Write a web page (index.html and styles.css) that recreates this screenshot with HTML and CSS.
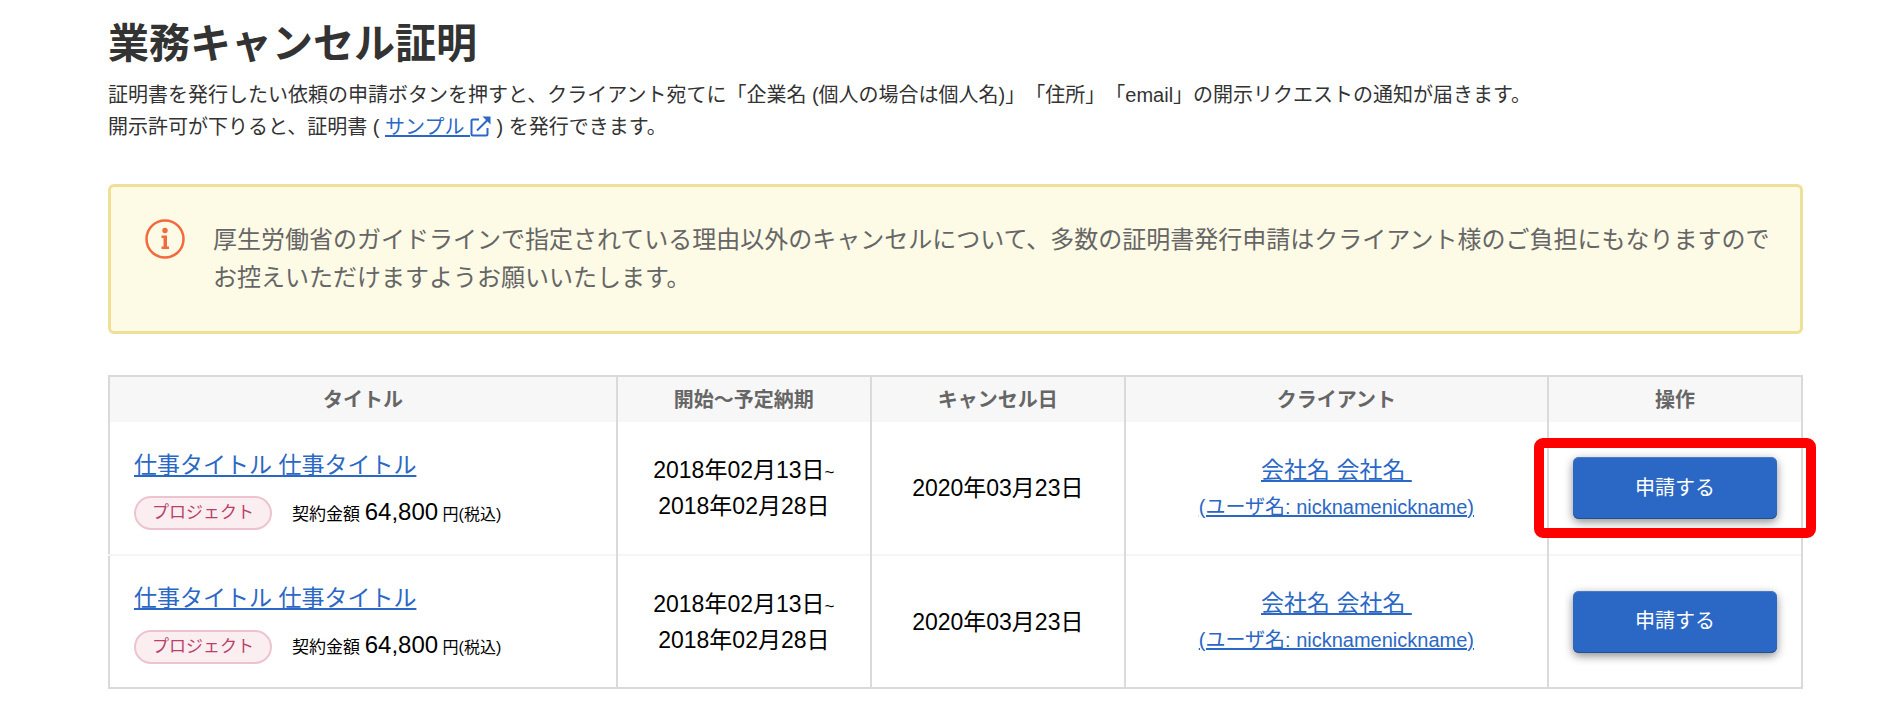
FILE: index.html
```html
<!DOCTYPE html>
<html lang="ja">
<head>
    <meta charset="UTF-8">
    <meta name="viewport" content="width=device-width, initial-scale=1.0">
    <title>業務キャンセル証明</title>
    <link rel="stylesheet" href="styles.css">
</head>
<body>
    <main class="container">
        <h1>業務キャンセル証明</h1>
        <p class="lead">
            証明書を発行したい依頼の申請ボタンを押すと、クライアント宛てに「企業名 (個人の場合は個人名)」「住所」「email」の開示リクエストの通知が届きます。<br>
            開示許可が下りると、証明書 ( <a href="#">サンプル <svg class="external-icon" viewBox="0 0 21 21" aria-hidden="true"><path d="M9 3.500H3Q1.500 3.500 1.500 5V18Q1.500 19.500 3 19.500H16Q17.500 19.500 17.500 18V12M7 14.500L17.500 4"/><path class="arrow" d="M12.500 0.500H20.500V8.500Z"/></svg></a> ) を発行できます。
        </p>

        <!-- Notice -->
        <div class="notice">
            <svg class="notice-icon" viewBox="0 0 40 40" aria-hidden="true">
                <circle class="ring" cx="20" cy="20" r="18.500"/>
                <circle cx="20" cy="11.500" r="2.700"/>
                <path d="M16.500 16.500H22V27.500H24V30H16.500V27.500H18.500V19H16.500Z"/>
            </svg>
            <p>厚生労働省のガイドラインで指定されている理由以外のキャンセルについて、多数の証明書発行申請はクライアント様のご負担にもなりますのでお控えいただけますようお願いいたします。</p>
        </div>

        <!-- Job list -->
        <table class="job-table">
            <thead>
                <tr>
                    <th class="col-title">タイトル</th>
                    <th class="col-date">開始〜予定納期</th>
                    <th class="col-date">キャンセル日</th>
                    <th class="col-client">クライアント</th>
                    <th class="col-action">操作</th>
                </tr>
            </thead>
            <tbody>
                <tr>
                    <td class="job">
                        <a href="#" class="job-title">仕事タイトル 仕事タイトル</a>
                        <div class="job-info">
                            <span class="badge">プロジェクト</span>
                            <span class="price">契約金額 <span class="amount">64,800</span><span class="unit"> 円(税込)</span></span>
                        </div>
                    </td>
                    <td>2018年02月13日<span class="tilde">~</span><br>2018年02月28日</td>
                    <td>2020年03月23日</td>
                    <td>
                        <a href="#">会社名 会社名&nbsp;</a><br>
                        <a href="#" class="nickname">(ユーザ名: nicknamenickname)</a>
                    </td>
                    <td>
                        <div class="action highlight">
                            <button type="button">申請する</button>
                        </div>
                    </td>
                </tr>
                <tr>
                    <td class="job">
                        <a href="#" class="job-title">仕事タイトル 仕事タイトル</a>
                        <div class="job-info">
                            <span class="badge">プロジェクト</span>
                            <span class="price">契約金額 <span class="amount">64,800</span><span class="unit"> 円(税込)</span></span>
                        </div>
                    </td>
                    <td>2018年02月13日<span class="tilde">~</span><br>2018年02月28日</td>
                    <td>2020年03月23日</td>
                    <td>
                        <a href="#">会社名 会社名&nbsp;</a><br>
                        <a href="#" class="nickname">(ユーザ名: nicknamenickname)</a>
                    </td>
                    <td>
                        <div class="action">
                            <button type="button">申請する</button>
                        </div>
                    </td>
                </tr>
            </tbody>
        </table>
    </main>
</body>
</html>
```
FILE: styles.css
```css
* {
    box-sizing: border-box;
}
body {
    margin: 0;
    background-color: #fff;
    color: #000;
    font-family: "Liberation Sans", "Noto Sans CJK JP", sans-serif;
    text-spacing-trim: space-all;
}
a {
    color: #2b68c5;
    text-decoration: underline;
}
.container {
    padding: 18px 97px 36px 108px;
}
h1 {
    margin: 0;
    color: #333;
    font-size: 41px;
    line-height: 52px;
}
.lead {
    margin: 9px 0 41px;
    color: #333;
    font-size: 20px;
    line-height: 32px;
}
.external-icon {
    width: 21px;
    height: 21px;
    vertical-align: -3px;
    fill: none;
    stroke: #2b68c5;
    stroke-width: 2;
}
.external-icon .arrow {
    fill: #2b68c5;
    stroke: none;
}

/* Notice */
.notice {
    display: flex;
    align-items: flex-start;
    gap: 28px;
    margin-bottom: 41px;
    padding: 32px 20px 34px 34px;
    border: 3px solid #eedf99;
    border-radius: 6px;
    background-color: #fdfae6;
    color: #666;
    font-size: 24px;
    line-height: 38px;
}
.notice p {
    margin: 0;
    padding-top: 2px;
}
.notice-icon {
    flex: none;
    width: 40px;
    height: 40px;
    fill: #f26a3d;
}
.notice-icon .ring {
    fill: none;
    stroke: #f26a3d;
    stroke-width: 2.5;
}

/* Job list */
.job-table {
    width: 100%;
    table-layout: fixed;
    border-collapse: collapse;
    border: 2px solid #dadada;
}
.job-table th {
    height: 46px;
    padding: 0;
    border-right: 2px solid #dadada;
    background-color: #f7f7f7;
    color: #666;
    font-size: 20px;
    line-height: 28px;
}
.job-table td {
    height: 133px;
    padding: 0 24px;
    border-right: 2px solid #dadada;
    font-size: 23px;
    line-height: 36px;
    text-align: center;
    vertical-align: middle;
}
.job-table tbody tr + tr td {
    border-top: 2px solid #f5f5f5;
}
.col-title {
    width: 30%;
}
.col-date,
.col-action {
    width: 15%;
}
.col-client {
    width: 25%;
}
.job-table .job {
    padding-top: 2px;
    text-align: left;
}
.job-info {
    display: flex;
    align-items: center;
    gap: 20px;
    margin-top: 12px;
}
.badge {
    padding: 0 16px;
    border: 2px solid #edc3d2;
    border-radius: 17px;
    background-color: #fbeef0;
    color: #b8406a;
    font-size: 17px;
    line-height: 30px;
}
.price {
    font-size: 17px;
    line-height: 34px;
}
.amount {
    font-size: 24px;
}
.unit {
    font-size: 16px;
}
.tilde {
    font-size: 17px;
    line-height: 1;
}
.nickname {
    font-size: 20px;
}
.action {
    position: relative;
}
.action button {
    display: block;
    width: 100%;
    height: 62px;
    padding: 0 0 4px;
    border: none;
    border-radius: 6px;
    background-color: #2b68c5;
    box-shadow: 0 3px 10px rgba(0, 0, 0, 0.45), inset 0 -1px 0 #24508f, inset 0 1px 0 #4a7cc4;
    color: #fff;
    font-family: inherit;
    font-size: 20px;
    cursor: pointer;
}
.action button:hover {
    background-color: #2459ab;
}
.highlight::after {
    content: "";
    position: absolute;
    inset: -19px -39px;
    border: 10px solid #f00;
    border-radius: 9px;
    pointer-events: none;
}
```
